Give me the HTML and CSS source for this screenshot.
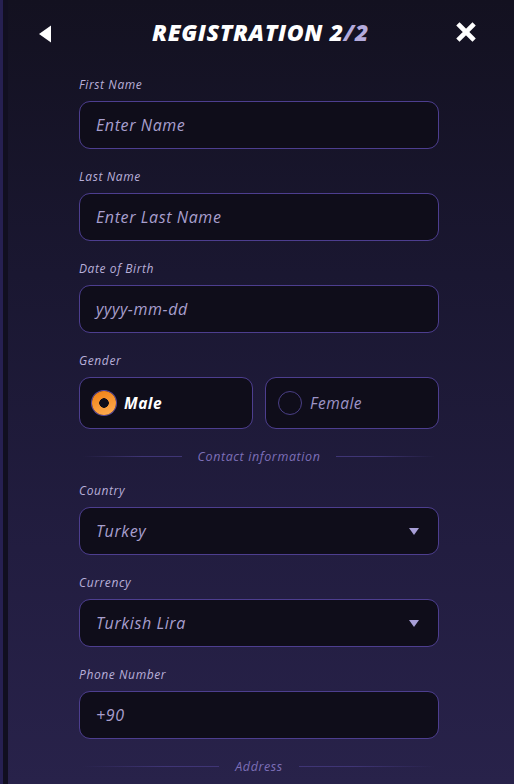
FILE: index.html
```html
<!DOCTYPE html>
<html lang="en">
<head>
<meta charset="utf-8">
<title>Registration 2/2</title>
<link rel="stylesheet" href="styles.css">
</head>
<body>
<div class="page">
  <div class="panel">
    <header class="header">
      <button class="icon-btn back" aria-label="Back">
        <svg width="14" height="18" viewBox="0 0 14 18"><polygon points="13,0.5 13,17.5 1,9" fill="#fff"/></svg>
      </button>
      <h1 class="title">REGISTRATION 2<span class="title-dim">/2</span></h1>
      <button class="icon-btn close" aria-label="Close">
        <svg width="20" height="20" viewBox="0 0 20 20"><path d="M3.5 3.5 L16.5 16.5 M16.5 3.5 L3.5 16.5" stroke="#fff" stroke-width="4.6" stroke-linecap="square"/></svg>
      </button>
    </header>

    <form class="form">
      <div class="field">
        <label class="label">First Name</label>
        <div class="input"><span class="placeholder">Enter Name</span></div>
      </div>
      <div class="field">
        <label class="label">Last Name</label>
        <div class="input"><span class="placeholder">Enter Last Name</span></div>
      </div>
      <div class="field">
        <label class="label">Date of Birth</label>
        <div class="input"><span class="placeholder">yyyy-mm-dd</span></div>
      </div>
      <div class="field field-gender">
        <label class="label">Gender</label>
        <div class="radios">
          <div class="radio selected"><span class="dot"></span><span class="radio-text">Male</span></div>
          <div class="radio"><span class="dot"></span><span class="radio-text">Female</span></div>
        </div>
      </div>

      <div class="divider"><span class="line left"></span><span class="divider-text">Contact information</span><span class="line right"></span></div>

      <div class="field">
        <label class="label">Country</label>
        <div class="input select"><span class="value">Turkey</span><span class="caret"></span></div>
      </div>
      <div class="field">
        <label class="label">Currency</label>
        <div class="input select"><span class="value">Turkish Lira</span><span class="caret"></span></div>
      </div>
      <div class="field field-last">
        <label class="label">Phone Number</label>
        <div class="input"><span class="value">+90</span></div>
      </div>

      <div class="divider"><span class="line left"></span><span class="divider-text">Address</span><span class="line right"></span></div>
    </form>
  </div>
</div>
</body>
</html>
```

FILE: styles.css
```css
* { box-sizing: border-box; }
html, body { margin: 0; padding: 0; height: 100%; }
body {
  font-family: "Open Sans", "Liberation Sans", sans-serif;
  background: #14122a;
  overflow: hidden;
}
.page {
  height: 784px;
  border-left: 3px solid #262051;
}
.panel {
  height: 100%;
  border-left: 5px solid #110f20;
  background: linear-gradient(180deg, #131120 0%, #1a1731 35%, #221d40 70%, #28224a 100%);
}
.header {
  height: 64px;
  display: flex;
  align-items: center;
  justify-content: space-between;
  padding: 0 36px 0 25px;
}
.icon-btn {
  background: none;
  border: 0;
  padding: 0;
  display: flex;
  align-items: center;
  justify-content: center;
  width: 24px;
  height: 24px;
  margin-top: 4px;
}
.close { margin-top: 0; }
.title {
  margin: 0 0 0 10px;
  font-size: 23px;
  font-weight: 800;
  font-style: italic;
  color: #ffffff;
  letter-spacing: 0.6px;
}
.title-dim { color: #b4abdc; }

.form {
  padding: 13px 0 0 71px;
  width: 431px;
}
.field {
  display: flex;
  flex-direction: column;
  gap: 8px;
  margin-bottom: 20px;
}
.field-gender, .field-last { margin-bottom: 0; }
.label {
  font-size: 12px;
  line-height: 16px;
  font-style: italic;
  color: #b8afd9;
  letter-spacing: 0.6px;
}
.input {
  height: 48px;
  border: 1px solid #4d3e8f;
  border-radius: 11px;
  background: #0f0d1a;
  display: flex;
  align-items: center;
  padding: 0 19px 0 16px;
  font-size: 16px;
  font-style: italic;
  letter-spacing: 0.6px;
}
.placeholder, .value { color: #a89fce; }
.select { justify-content: space-between; }
.caret {
  width: 0; height: 0;
  border-left: 5px solid transparent;
  border-right: 5px solid transparent;
  border-top: 7px solid #a89fd8;
}
.radios {
  display: grid;
  grid-template-columns: 1fr 1fr;
  gap: 12px;
}
.radio {
  height: 52px;
  border: 1px solid #4d3e8f;
  border-radius: 11px;
  background: #0f0d1a;
  display: flex;
  align-items: center;
  gap: 8px;
  padding-left: 12px;
  font-size: 15.5px;
  font-style: italic;
  letter-spacing: 0.5px;
  color: #9d94c6;
}
.dot {
  width: 24px; height: 24px;
  border-radius: 50%;
  border: 1px solid #4a3f86;
}
.radio.selected .dot {
  border: 0;
  background: radial-gradient(circle, #0f0d1a 0 4.5px, transparent 5px),
              linear-gradient(160deg, #f07f12, #ffae55);
  box-shadow: 0 0 0 1px #5a4aa0;
}
.radio.selected .radio-text { color: #fff; font-weight: 700; }
.divider {
  height: 18px;
  margin: 18px 0;
  display: flex;
  align-items: center;
  gap: 16px;
  padding: 0 4px;
}
.line { flex: 1; height: 1px; }
.line.left { background: linear-gradient(90deg, rgba(70,58,130,0), #3f3575 60%); }
.line.right { background: linear-gradient(90deg, #3f3575 40%, rgba(70,58,130,0)); }
.divider-text {
  font-size: 12.5px;
  font-style: italic;
  letter-spacing: 0.6px;
  color: #7d6fb8;
}
```
